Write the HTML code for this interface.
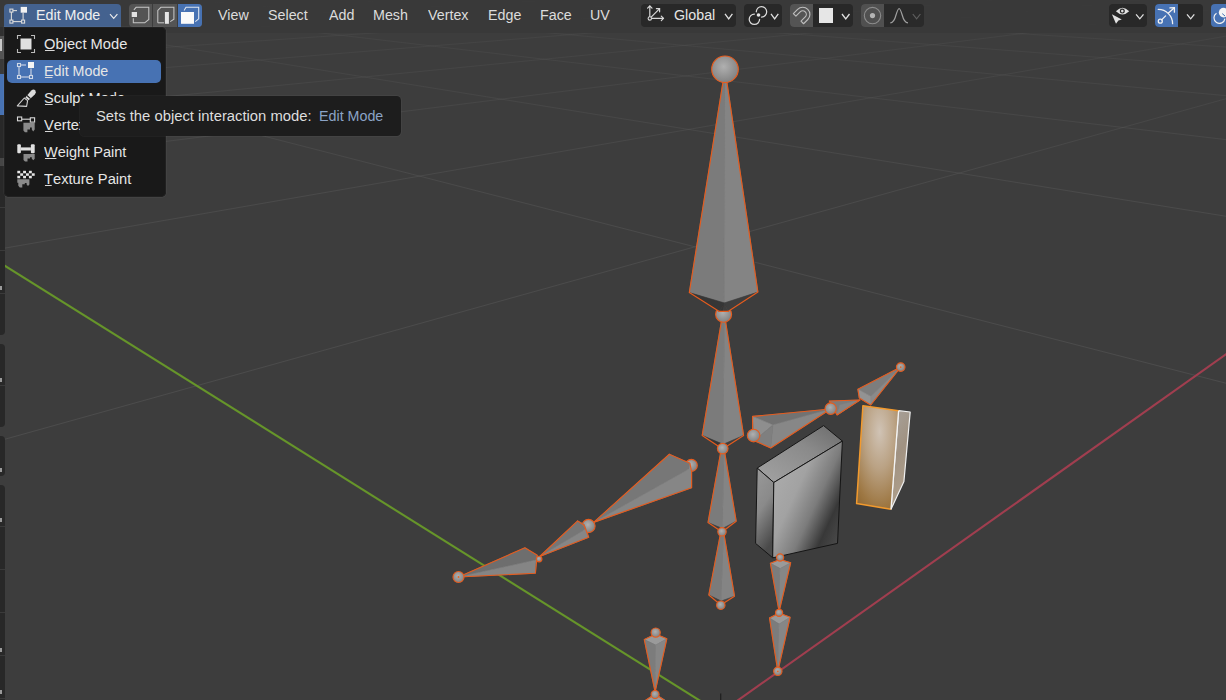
<!DOCTYPE html>
<html><head><meta charset="utf-8">
<style>
html,body{margin:0;padding:0;width:1226px;height:700px;overflow:hidden;background:#3d3d3d;font-family:"Liberation Sans",sans-serif;}
#scene{position:absolute;left:0;top:0;}
.hdr{position:absolute;left:0;top:0;width:1226px;height:32.5px;background:rgba(57,57,57,0.9);}
.tb{position:absolute;left:0;width:5px;background:#282828;border-radius:0 4px 4px 0;}
.sep{position:absolute;left:0;width:5px;height:1px;background:#3a3a3a;}
.btn{position:absolute;top:4px;height:23px;border-radius:4px;}
.menuitem{position:absolute;color:#e2e2e2;font-size:14.3px;}
.mtext{position:absolute;top:5px;height:14px;line-height:14px;color:#dcdcdc;font-size:14.3px;}
</style></head><body>
<svg id="scene" width="1226" height="700" viewBox="0 0 1226 700">
<defs>
  <radialGradient id="sph" cx="0.45" cy="0.4" r="0.6">
    <stop offset="0" stop-color="#b0b0b0"/><stop offset="1" stop-color="#828282"/>
  </radialGradient>
  <linearGradient id="gtop" x1="0" y1="1" x2="1" y2="0"><stop offset="0" stop-color="#a3a3a3"/><stop offset="0.6" stop-color="#8a8a8a"/><stop offset="1" stop-color="#6a6a6a"/></linearGradient>
  <linearGradient id="gleft" x1="0" y1="0" x2="0.3" y2="1"><stop offset="0" stop-color="#9a9a9a"/><stop offset="0.5" stop-color="#8a8a8a"/><stop offset="1" stop-color="#4a4a4a"/></linearGradient>
  <linearGradient id="gfront" x1="0.05" y1="0.15" x2="0.95" y2="0.85"><stop offset="0" stop-color="#adadad"/><stop offset="0.35" stop-color="#a2a2a2"/><stop offset="0.6" stop-color="#7c7c7c"/><stop offset="0.82" stop-color="#383838"/><stop offset="1" stop-color="#4a4a4a"/></linearGradient>
  <radialGradient id="ofront" cx="0.55" cy="0.25" r="0.9"><stop offset="0" stop-color="#d0c3b5"/><stop offset="0.4" stop-color="#baa284"/><stop offset="0.8" stop-color="#9e7844"/><stop offset="1" stop-color="#8e6630"/></radialGradient>
  <linearGradient id="oside" x1="0" y1="0" x2="0.3" y2="1"><stop offset="0" stop-color="#a8a29c"/><stop offset="0.5" stop-color="#a09282"/><stop offset="1" stop-color="#b0a08c"/></linearGradient>
  <linearGradient id="gg" gradientUnits="userSpaceOnUse" x1="0" y1="30" x2="0" y2="700"><stop offset="0" stop-color="#5a5a5a" stop-opacity="0.22"/><stop offset="0.25" stop-color="#5a5a5a" stop-opacity="0.45"/><stop offset="1" stop-color="#5a5a5a" stop-opacity="0.58"/></linearGradient>
</defs>
<g id="grid"><line x1="-10.0" y1="443.4" x2="1236.0" y2="95.9" stroke="url(#gg)"/>
<line x1="-10.0" y1="65.8" x2="1236.0" y2="385.8" stroke="url(#gg)"/>
<line x1="-10.0" y1="250.7" x2="1236.0" y2="34.4" stroke="url(#gg)"/>
<line x1="-10.0" y1="16.5" x2="1236.0" y2="217.9" stroke="url(#gg)"/>
<line x1="-10.0" y1="163.6" x2="1236.0" y2="6.6" stroke="url(#gg)"/>
<line x1="-10.0" y1="-6.1" x2="1236.0" y2="140.8" stroke="url(#gg)"/>
<line x1="-10.0" y1="114.0" x2="1236.0" y2="-9.2" stroke="url(#gg)"/>
<line x1="-10.0" y1="-19.0" x2="1236.0" y2="96.6" stroke="url(#gg)"/>
<line x1="-10.0" y1="81.9" x2="1236.0" y2="-19.5" stroke="url(#gg)"/>
<line x1="-10.0" y1="-27.5" x2="1236.0" y2="67.9" stroke="url(#gg)"/>
<line x1="-10.0" y1="59.5" x2="1236.0" y2="-26.6" stroke="url(#gg)"/>
<line x1="-10.0" y1="-33.4" x2="1236.0" y2="47.7" stroke="url(#gg)"/>
<line x1="-10.0" y1="43.0" x2="1236.0" y2="-31.9" stroke="url(#gg)"/>
<line x1="-10.0" y1="-37.7" x2="1236.0" y2="32.8" stroke="url(#gg)"/>
<line x1="-10.0" y1="30.3" x2="1236.0" y2="-36.0" stroke="url(#gg)"/>
<line x1="-10.0" y1="-41.1" x2="1236.0" y2="21.3" stroke="url(#gg)"/>
<line x1="-10.0" y1="20.2" x2="1236.0" y2="-39.2" stroke="url(#gg)"/>
<line x1="-10.0" y1="-43.8" x2="1236.0" y2="12.2" stroke="url(#gg)"/>
<line x1="-10.0" y1="12.0" x2="1236.0" y2="-41.8" stroke="url(#gg)"/>
<line x1="-10.0" y1="-45.9" x2="1236.0" y2="4.8" stroke="url(#gg)"/>
<line x1="-10.0" y1="5.2" x2="1236.0" y2="-44.0" stroke="url(#gg)"/>
<line x1="-10.0" y1="-47.7" x2="1236.0" y2="-1.3" stroke="url(#gg)"/>
<line x1="-10.0" y1="-0.5" x2="1236.0" y2="-45.8" stroke="url(#gg)"/>
<line x1="-10.0" y1="-49.3" x2="1236.0" y2="-6.5" stroke="url(#gg)"/>
<line x1="-10.0" y1="-5.4" x2="1236.0" y2="-47.3" stroke="url(#gg)"/>
<line x1="-10.0" y1="-50.6" x2="1236.0" y2="-10.9" stroke="url(#gg)"/>
<line x1="-10.0" y1="-9.6" x2="1236.0" y2="-48.7" stroke="url(#gg)"/>
<line x1="-10.0" y1="-51.7" x2="1236.0" y2="-14.7" stroke="url(#gg)"/>
<line x1="-10.0" y1="-13.2" x2="1236.0" y2="-49.8" stroke="url(#gg)"/>
<line x1="-10.0" y1="-52.7" x2="1236.0" y2="-18.1" stroke="url(#gg)"/>
<line x1="-10.0" y1="-16.5" x2="1236.0" y2="-50.9" stroke="url(#gg)"/>
<line x1="-10.0" y1="-53.5" x2="1236.0" y2="-21.0" stroke="url(#gg)"/>
<line x1="-10.0" y1="-19.3" x2="1236.0" y2="-51.8" stroke="url(#gg)"/>
<line x1="-10.0" y1="-54.3" x2="1236.0" y2="-23.6" stroke="url(#gg)"/>
<line x1="-10.0" y1="-21.9" x2="1236.0" y2="-52.6" stroke="url(#gg)"/>
<line x1="-10.0" y1="-55.0" x2="1236.0" y2="-25.9" stroke="url(#gg)"/>
<line x1="-10.0" y1="-24.2" x2="1236.0" y2="-53.3" stroke="url(#gg)"/>
<line x1="-10.0" y1="-55.6" x2="1236.0" y2="-28.0" stroke="url(#gg)"/>
<line x1="-10.0" y1="-26.3" x2="1236.0" y2="-54.0" stroke="url(#gg)"/>
<line x1="-10.0" y1="-56.1" x2="1236.0" y2="-29.9" stroke="url(#gg)"/>
<line x1="-10.0" y1="-28.1" x2="1236.0" y2="-54.6" stroke="url(#gg)"/>
<line x1="-10.0" y1="-56.6" x2="1236.0" y2="-31.6" stroke="url(#gg)"/>
<line x1="-10.0" y1="-29.9" x2="1236.0" y2="-55.1" stroke="url(#gg)"/>
<line x1="-10.0" y1="-57.1" x2="1236.0" y2="-33.2" stroke="url(#gg)"/>
<line x1="-10.0" y1="-31.4" x2="1236.0" y2="-55.6" stroke="url(#gg)"/>
<line x1="-10.0" y1="-57.5" x2="1236.0" y2="-34.6" stroke="url(#gg)"/>
<line x1="-10.0" y1="-32.9" x2="1236.0" y2="-56.1" stroke="url(#gg)"/>
<line x1="-10.0" y1="-57.9" x2="1236.0" y2="-35.9" stroke="url(#gg)"/>
<line x1="-10.0" y1="-34.2" x2="1236.0" y2="-56.5" stroke="url(#gg)"/>
<line x1="-10.0" y1="-58.2" x2="1236.0" y2="-37.1" stroke="url(#gg)"/>
<line x1="-10.0" y1="-35.4" x2="1236.0" y2="-56.9" stroke="url(#gg)"/>
<line x1="-10.0" y1="-58.6" x2="1236.0" y2="-38.2" stroke="url(#gg)"/>
<line x1="-10.0" y1="-36.6" x2="1236.0" y2="-57.3" stroke="url(#gg)"/>
<line x1="-10.0" y1="-58.9" x2="1236.0" y2="-39.3" stroke="url(#gg)"/>
<line x1="-10.0" y1="-37.6" x2="1236.0" y2="-57.6" stroke="url(#gg)"/>
<line x1="-10.0" y1="-59.2" x2="1236.0" y2="-40.2" stroke="url(#gg)"/>
<line x1="-10.0" y1="-38.6" x2="1236.0" y2="-57.9" stroke="url(#gg)"/>
<line x1="-10.0" y1="-59.4" x2="1236.0" y2="-41.1" stroke="url(#gg)"/>
<line x1="-10.0" y1="-39.6" x2="1236.0" y2="-58.2" stroke="url(#gg)"/>
<line x1="-10.0" y1="-59.7" x2="1236.0" y2="-42.0" stroke="url(#gg)"/>
<line x1="-10.0" y1="-40.4" x2="1236.0" y2="-58.5" stroke="url(#gg)"/>
<line x1="-10.0" y1="-59.9" x2="1236.0" y2="-42.8" stroke="url(#gg)"/>
<line x1="-10.0" y1="-41.2" x2="1236.0" y2="-58.8" stroke="url(#gg)"/>
<line x1="-10.0" y1="-60.1" x2="1236.0" y2="-43.5" stroke="url(#gg)"/>
<line x1="-10.0" y1="-42.0" x2="1236.0" y2="-59.0" stroke="url(#gg)"/>
<line x1="-10.0" y1="-60.3" x2="1236.0" y2="-44.2" stroke="url(#gg)"/>
<line x1="-10.0" y1="-42.7" x2="1236.0" y2="-59.3" stroke="url(#gg)"/>
<line x1="-10.0" y1="-60.5" x2="1236.0" y2="-44.9" stroke="url(#gg)"/>
<line x1="-10.0" y1="-43.4" x2="1236.0" y2="-59.5" stroke="url(#gg)"/>
<line x1="-10.0" y1="-60.7" x2="1236.0" y2="-45.5" stroke="url(#gg)"/>
<line x1="-10.0" y1="-44.0" x2="1236.0" y2="-59.7" stroke="url(#gg)"/>
<line x1="-10.0" y1="-60.9" x2="1236.0" y2="-46.1" stroke="url(#gg)"/>
<line x1="-10.0" y1="-44.7" x2="1236.0" y2="-59.9" stroke="url(#gg)"/>
<line x1="-10.0" y1="-61.0" x2="1236.0" y2="-46.6" stroke="url(#gg)"/>
<line x1="-10.0" y1="-45.2" x2="1236.0" y2="-60.1" stroke="url(#gg)"/>
<line x1="-10.0" y1="-61.2" x2="1236.0" y2="-47.1" stroke="url(#gg)"/>
<line x1="-10.0" y1="-45.8" x2="1236.0" y2="-60.2" stroke="url(#gg)"/>
<line x1="-10.0" y1="-61.3" x2="1236.0" y2="-47.6" stroke="url(#gg)"/><line x1="-10.0" y1="1230.6" x2="1236.0" y2="347.1" stroke="#a03e4f" stroke-width="2.1"/><line x1="-10.0" y1="256.4" x2="1236.0" y2="1036.1" stroke="#66952a" stroke-width="2.1"/></g>
<g id="bones" stroke="#e65c1e" stroke-width="1.15" stroke-linejoin="round">
<polygon points="722.3,316.0 724.7,316.0 723.2,444.3 702.2,435.4" fill="#7b7b7b" stroke="#7b7b7b" stroke-width="0.6"/>
<polygon points="724.7,316.0 743.6,435.4 723.2,444.3" fill="#848484" stroke="#848484" stroke-width="0.6"/>
<polygon points="702.2,435.4 723.2,444.3 722.6,449.0" fill="#363636" stroke="#363636" stroke-width="0.6"/>
<polygon points="723.2,444.3 743.6,435.4 722.6,449.0" fill="#3e3e3e" stroke="#3e3e3e" stroke-width="0.6"/>
<polygon points="722.3,316.0 724.7,316.0 743.6,435.4 722.6,449.0 702.2,435.4" fill="none"/>
<polygon points="721.1,450.0 724.3,450.0 722.5,528.5 708.0,522.5" fill="#7b7b7b" stroke="#7b7b7b" stroke-width="0.6"/>
<polygon points="724.3,450.0 736.2,521.2 722.5,528.5" fill="#848484" stroke="#848484" stroke-width="0.6"/>
<polygon points="708.0,522.5 722.5,528.5 722.0,532.0" fill="#404040" stroke="#404040" stroke-width="0.6"/>
<polygon points="722.5,528.5 736.2,521.2 722.0,532.0" fill="#484848" stroke="#484848" stroke-width="0.6"/>
<polygon points="721.1,450.0 724.3,450.0 736.2,521.2 722.0,532.0 708.0,522.5" fill="none"/>
<polygon points="720.6,533.0 723.8,533.0 721.2,601.0 708.8,595.0" fill="#7b7b7b" stroke="#7b7b7b" stroke-width="0.6"/>
<polygon points="723.8,533.0 734.5,596.2 721.2,601.0" fill="#848484" stroke="#848484" stroke-width="0.6"/>
<polygon points="708.8,595.0 721.2,601.0 720.8,605.0" fill="#404040" stroke="#404040" stroke-width="0.6"/>
<polygon points="721.2,601.0 734.5,596.2 720.8,605.0" fill="#484848" stroke="#484848" stroke-width="0.6"/>
<polygon points="720.6,533.0 723.8,533.0 734.5,596.2 720.8,605.0 708.8,595.0" fill="none"/>
<circle cx="722.7" cy="448.6" r="5.3" fill="url(#sph)"/>
<circle cx="722.0" cy="531.8" r="4.2" fill="url(#sph)"/>
<circle cx="720.8" cy="605.2" r="4.2" fill="url(#sph)"/>
<circle cx="723.6" cy="314.2" r="8.0" fill="url(#sph)"/>
<polygon points="725.0,69.3 689.3,292.6 724.3,302.9" fill="#7b7b7b" stroke="#7b7b7b" stroke-width="0.6"/>
<polygon points="725.0,69.3 724.3,302.9 757.9,292.1" fill="#848484" stroke="#848484" stroke-width="0.6"/>
<polygon points="689.3,292.6 724.3,302.9 719.3,311.4" fill="#363636" stroke="#363636" stroke-width="0.6"/>
<polygon points="724.3,302.9 719.3,311.4 723.6,311.4" fill="#363636" stroke="#363636" stroke-width="0.6"/>
<polygon points="724.3,302.9 757.9,292.1 728.0,311.4" fill="#3e3e3e" stroke="#3e3e3e" stroke-width="0.6"/>
<polygon points="724.3,302.9 723.6,311.4 728.0,311.4" fill="#3e3e3e" stroke="#3e3e3e" stroke-width="0.6"/>
<polygon points="725.0,69.3 689.3,292.6 719.3,311.4 728.0,311.4 757.9,292.1" fill="none"/>
<circle cx="725.0" cy="69.3" r="13.3" fill="url(#sph)"/>
<polygon points="757.2,468.1 823.6,425.6 842.4,441.1 773.8,482.5" fill="url(#gtop)" stroke="#151515" stroke-width="1"/>
<polygon points="757.2,468.1 773.8,482.5 772.7,557.8 755.6,543.4" fill="url(#gleft)" stroke="#151515" stroke-width="1"/>
<polygon points="773.8,482.5 842.4,441.1 837.5,543.4 772.7,557.8" fill="url(#gfront)" stroke="#151515" stroke-width="1"/>
<polygon points="898.6,410.7 910.2,412.0 903.9,481.6 891.0,509.3" fill="url(#oside)" stroke="#f0f0f0" stroke-width="1.2"/>
<polygon points="862.9,405.7 898.6,410.7 891.0,509.3 856.6,503.6" fill="url(#ofront)" stroke="none"/>
<polyline points="891.0,509.3 856.6,503.6 862.9,405.7 898.6,410.7" fill="none" stroke="#f29a2e" stroke-width="1.5"/>
<line x1="898.6" y1="410.7" x2="891" y2="509.3" stroke="#f4f4f4" stroke-width="1.3"/>
<polygon points="830.7,409.0 752.6,416.4 772.9,425.0" fill="#727272" stroke="#727272" stroke-width="0.6"/>
<polygon points="830.7,409.0 772.9,425.0 770.7,447.9" fill="#878787" stroke="#878787" stroke-width="0.6"/>
<polygon points="752.6,416.4 772.9,425.0 754.3,440.7" fill="#8e8e8e" stroke="#8e8e8e" stroke-width="0.6"/>
<polygon points="772.9,425.0 770.7,447.9 754.3,440.7" fill="#7f7f7f" stroke="#7f7f7f" stroke-width="0.6"/>
<polygon points="830.7,409.0 752.6,416.4 752.6,435.0 754.3,440.7 770.7,447.9" fill="none"/>
<circle cx="753.6" cy="435.5" r="6.3" fill="url(#sph)"/>
<polygon points="829.3,401.0 860.0,400.0 837.0,415.0" fill="#7c7c7c" stroke="#7c7c7c" stroke-width="0.6"/>
<polygon points="840.0,405.0 860.0,400.0 837.0,415.0" fill="#858585" stroke="#858585" stroke-width="0.6"/>
<polygon points="829.3,401.0 860.0,400.0 837.0,415.0" fill="none"/>
<circle cx="830.7" cy="408.6" r="5.7" fill="url(#sph)"/>
<polygon points="857.9,389.3 900.7,367.1 870.7,396.4" fill="#7d7d7d" stroke="#7d7d7d" stroke-width="0.6"/>
<polygon points="870.7,396.4 900.7,367.1 870.7,405.0" fill="#8a8a8a" stroke="#8a8a8a" stroke-width="0.6"/>
<polygon points="857.9,389.3 870.7,396.4 870.7,405.0 859.3,397.9" fill="#939393" stroke="#939393" stroke-width="0.6"/>
<polygon points="857.9,389.3 900.7,367.1 870.7,405.0 859.3,397.9" fill="none"/>
<circle cx="900.7" cy="367.1" r="4.3" fill="url(#sph)"/>
<circle cx="900.7" cy="367.1" r="0.9" fill="#e8621f" stroke="none"/>
<circle cx="691.3" cy="465.4" r="6.0" fill="url(#sph)"/>
<circle cx="588.5" cy="526.0" r="6.6" fill="url(#sph)"/>
<polygon points="539.7,556.5 577.6,520.9 586.0,529.0" fill="#767676" stroke="#767676" stroke-width="0.6"/>
<polygon points="539.7,556.5 586.0,529.0 588.7,537.3" fill="#868686" stroke="#868686" stroke-width="0.6"/>
<polygon points="577.6,520.9 584.0,524.0 586.0,529.0" fill="#7a7a7a" stroke="#7a7a7a" stroke-width="0.6"/>
<polygon points="539.7,556.5 577.6,520.9 584.0,525.0 588.7,537.3" fill="none"/>
<polygon points="593.6,522.4 669.3,454.2 689.9,463.3 689.0,469.0" fill="#777777" stroke="#777777" stroke-width="0.6"/>
<polygon points="593.6,522.4 689.0,469.0 691.6,471.0 691.6,487.8" fill="#868686" stroke="#868686" stroke-width="0.6"/>
<polygon points="593.6,522.4 669.3,454.2 689.9,463.3 691.6,472.0 691.6,487.8" fill="none"/>
<polygon points="458.5,577.0 524.9,547.8 537.3,555.3 536.0,560.0" fill="#6e6e6e" stroke="#6e6e6e" stroke-width="0.6"/>
<polygon points="458.5,577.0 536.0,560.0 535.4,573.2" fill="#858585" stroke="#858585" stroke-width="0.6"/>
<polygon points="458.5,577.0 524.9,547.8 537.3,555.3 535.4,573.2" fill="none"/>
<circle cx="539.1" cy="559.0" r="2.8" fill="url(#sph)"/>
<circle cx="458.5" cy="577.0" r="5.5" fill="url(#sph)"/>
<circle cx="458.5" cy="577.0" r="0.9" fill="#e8621f" stroke="none"/>
<polygon points="770.4,563.3 780.0,559.5 790.7,562.7 780.1,568.5" fill="#9a9a9a" stroke="#9a9a9a" stroke-width="0.6"/>
<polygon points="770.4,563.3 780.1,568.5 779.1,611.5" fill="#7c7c7c" stroke="#7c7c7c" stroke-width="0.6"/>
<polygon points="780.1,568.5 790.7,562.7 779.1,611.5" fill="#868686" stroke="#868686" stroke-width="0.6"/>
<polygon points="770.4,563.3 780.0,559.5 790.7,562.7 779.1,611.5" fill="none"/>
<circle cx="780.1" cy="557.5" r="3.6" fill="url(#sph)"/>
<polygon points="769.5,617.9 779.1,613.0 790.1,617.3 779.1,624.1" fill="#9a9a9a" stroke="#9a9a9a" stroke-width="0.6"/>
<polygon points="769.5,617.9 779.1,624.1 777.8,671.3" fill="#7c7c7c" stroke="#7c7c7c" stroke-width="0.6"/>
<polygon points="779.1,624.1 790.1,617.3 777.8,671.3" fill="#868686" stroke="#868686" stroke-width="0.6"/>
<polygon points="769.5,617.9 779.1,613.0 790.1,617.3 777.8,671.3" fill="none"/>
<circle cx="779.1" cy="612.8" r="3.6" fill="url(#sph)"/>
<circle cx="777.8" cy="671.3" r="4.2" fill="url(#sph)"/>
<circle cx="777.8" cy="671.3" r="0.9" fill="#e8621f" stroke="none"/>
<polygon points="644.3,639.6 655.7,634.0 666.8,638.8 655.7,645.1" fill="#9a9a9a" stroke="#9a9a9a" stroke-width="0.6"/>
<polygon points="644.3,639.6 655.7,645.1 655.1,691.9" fill="#7c7c7c" stroke="#7c7c7c" stroke-width="0.6"/>
<polygon points="655.7,645.1 666.8,638.8 655.1,691.9" fill="#868686" stroke="#868686" stroke-width="0.6"/>
<polygon points="644.3,639.6 655.7,634.0 666.8,638.8 655.1,691.9" fill="none"/>
<circle cx="655.7" cy="632.6" r="4.6" fill="url(#sph)"/>
<polygon points="643.0,702.0 655.0,694.0 668.0,702.0 655.0,708.0" fill="#9a9a9a" stroke="#9a9a9a" stroke-width="0.6"/>
<polyline points="640.0,704.0 655.1,694.0 670.0,704.0" fill="none"/>
<circle cx="655.1" cy="694.5" r="4.0" fill="url(#sph)"/>
<line x1="720.7" y1="693.5" x2="720.7" y2="700" stroke="#1e1e1e" stroke-width="1.2"/>
</g>
</svg>
<div class="hdr"></div>
<div class="tb" style="top:27px;height:308px"></div>
<div class="tb" style="top:344px;height:83px"></div>
<div class="tb" style="top:436px;height:40px"></div>
<div class="tb" style="top:485px;height:235px"></div>
<div class="sep" style="top:207px"></div>
<div class="sep" style="top:250px"></div>
<div class="sep" style="top:293px"></div>
<div class="sep" style="top:385px"></div>
<div class="sep" style="top:526px"></div>
<div class="sep" style="top:569px"></div>
<div class="sep" style="top:612px"></div>
<div class="sep" style="top:655px"></div>
<div class="sep" style="top:698px"></div>
<div style="position:absolute;left:0;top:27px;width:4px;height:9px;background:#303030"></div>
<div style="position:absolute;left:0;top:36px;width:4px;height:23px;background:#545454"></div>
<div style="position:absolute;left:0;top:39px;width:1.5px;height:12px;background:#c8c8c8"></div>
<div style="position:absolute;left:0;top:59px;width:4px;height:15px;background:#3a3a3a"></div>
<div style="position:absolute;left:0;top:74px;width:4px;height:41px;background:#4772b3"></div>
<div style="position:absolute;left:0;top:158px;width:4px;height:8px;background:#464646"></div>
<div style="position:absolute;left:0;top:286px;width:2px;height:4px;background:#9a9a9a"></div>
<div style="position:absolute;left:0;top:378px;width:2px;height:4px;background:#9a9a9a"></div>
<div style="position:absolute;left:0;top:468px;width:2px;height:4px;background:#9a9a9a"></div>
<div style="position:absolute;left:0;top:518px;width:2px;height:4px;background:#9a9a9a"></div>
<div style="position:absolute;left:0;top:648px;width:2px;height:4px;background:#9a9a9a"></div>
<div style="position:absolute;left:0;top:690px;width:2px;height:4px;background:#9a9a9a"></div>
<div class="btn" style="left:4px;width:117px;top:4px;height:24px;background:#44628f;border-radius:4px 4px 0 0"></div>
<div style="position:absolute;left:36px;top:6.04px;height:16.98px;line-height:16.98px;font-size:15.2px;color:#f0f0f0;white-space:nowrap;transform:scaleX(0.94);transform-origin:0 0">Edit Mode</div>
<div class="btn" style="left:129px;width:73px;background:#545454"></div>
<div class="btn" style="left:178px;width:24px;background:#4772b3;border-radius:0 4px 4px 0"></div>
<div style="position:absolute;left:152px;top:4px;width:1px;height:23px;background:#3c3c3c"></div>
<div style="position:absolute;left:177px;top:4px;width:1px;height:23px;background:#3c3c3c"></div>
<div style="position:absolute;left:218px;top:6.14px;height:16.98px;line-height:16.98px;font-size:15.2px;color:#dcdcdc;white-space:nowrap;transform:scaleX(0.94);transform-origin:0 0">View</div>
<div style="position:absolute;left:268px;top:6.14px;height:16.98px;line-height:16.98px;font-size:15.2px;color:#dcdcdc;white-space:nowrap;transform:scaleX(0.94);transform-origin:0 0">Select</div>
<div style="position:absolute;left:329px;top:6.14px;height:16.98px;line-height:16.98px;font-size:15.2px;color:#dcdcdc;white-space:nowrap;transform:scaleX(0.94);transform-origin:0 0">Add</div>
<div style="position:absolute;left:372.5px;top:6.14px;height:16.98px;line-height:16.98px;font-size:15.2px;color:#dcdcdc;white-space:nowrap;transform:scaleX(0.94);transform-origin:0 0">Mesh</div>
<div style="position:absolute;left:427.5px;top:6.14px;height:16.98px;line-height:16.98px;font-size:15.2px;color:#dcdcdc;white-space:nowrap;transform:scaleX(0.94);transform-origin:0 0">Vertex</div>
<div style="position:absolute;left:488px;top:6.14px;height:16.98px;line-height:16.98px;font-size:15.2px;color:#dcdcdc;white-space:nowrap;transform:scaleX(0.94);transform-origin:0 0">Edge</div>
<div style="position:absolute;left:539.5px;top:6.14px;height:16.98px;line-height:16.98px;font-size:15.2px;color:#dcdcdc;white-space:nowrap;transform:scaleX(0.94);transform-origin:0 0">Face</div>
<div style="position:absolute;left:590px;top:6.14px;height:16.98px;line-height:16.98px;font-size:15.2px;color:#dcdcdc;white-space:nowrap;transform:scaleX(0.94);transform-origin:0 0">UV</div>
<div class="btn" style="left:641px;width:95px;background:#282828"></div>
<div style="position:absolute;left:673.5px;top:6.34px;height:16.98px;line-height:16.98px;font-size:15.2px;color:#e4e4e4;white-space:nowrap;transform:scaleX(0.94);transform-origin:0 0">Global</div>
<div class="btn" style="left:744px;width:38px;background:#282828"></div>
<div class="btn" style="left:790px;width:63px;background:#282828"></div>
<div class="btn" style="left:790px;width:23px;background:#545454;border-radius:4px 0 0 4px"></div>
<div style="position:absolute;left:818.7px;top:8px;width:14.8px;height:15px;background:#e6e6e6"></div>
<div class="btn" style="left:861px;width:63px;background:#2a2a2a"></div>
<div class="btn" style="left:861px;width:23px;background:#505050;border-radius:4px 0 0 4px"></div>
<div class="btn" style="left:1109px;width:38px;background:#282828"></div>
<div class="btn" style="left:1155px;width:48px;background:#282828"></div>
<div class="btn" style="left:1155px;width:23px;background:#4772b3;border-radius:4px 0 0 4px"></div>
<div class="btn" style="left:1211px;width:30px;background:#4772b3"></div>
<svg style="position:absolute;left:0;top:0" width="1226" height="32" viewBox="0 0 1226 32"><g fill="none" stroke="#dadada" stroke-width="1.1"><rect x="9.9" y="9.1" width="3" height="3"/><rect x="9.9" y="20.1" width="3" height="3"/><rect x="21.6" y="20.1" width="3" height="3"/><line x1="11.4" y1="12.1" x2="11.4" y2="20.1"/><line x1="12.9" y1="21.6" x2="21.6" y2="21.6"/><line x1="23.1" y1="12.7" x2="23.1" y2="20.1"/><line x1="12.9" y1="10.6" x2="17" y2="10.6"/></g><rect x="20.7" y="6.9" width="6.3" height="5.8" fill="#f2f2f2"/><polyline points="110,14.2 113.7,18.4 117.4,14.2" fill="none" stroke="#ececec" stroke-width="1.15"/><g fill="none" stroke="#c6c6c6" stroke-width="1.05"><polyline points="133.9,9.8 136.1,7.3 148.8,7.3 148.8,19.4 144.7,22.8 133.3,22.8 133.3,18.2"/><polyline points="157.8,22.8 157.8,10.4 160.9,7.3 173.9,7.3 173.9,19.1 170.2,21.6"/><line x1="157.8" y1="22.8" x2="164" y2="22.8"/><polyline points="184.1,10.4 186,7.3 198.7,7.3 198.7,18.8 195.3,21.6" stroke="#dfe6f0"/></g><rect x="131.7" y="12" width="5.3" height="5" fill="#e2e2e2"/><rect x="164.9" y="12" width="4" height="11.8" fill="#e6e6e6"/><rect x="181" y="12" width="13" height="11.8" fill="#fafafa"/><g fill="none" stroke="#d8d8d8" stroke-width="1.2" stroke-linecap="round" stroke-linejoin="round"><polyline points="649.8,6 649.8,18.4 663.5,18.4"/><polyline points="647.6,8.2 649.8,6 652,8.2"/><polyline points="661.3,16.2 663.5,18.4 661.3,20.6"/><line x1="651.4" y1="16.8" x2="659.6" y2="8.6"/><polyline points="656.4,8.6 659.6,8.6 659.6,11.8"/></g><circle cx="649.8" cy="18.4" r="1.7" fill="#282828" stroke="#d8d8d8" stroke-width="1.1"/><polyline points="725,13.8 728.7,18.8 732.4,13.8" fill="none" stroke="#e0e0e0" stroke-width="1.3"/><g fill="none" stroke="#dcdcdc" stroke-width="1.25" stroke-linecap="round"><path d="M754.4,14.1 A5.2,5.2 0 1 0 759.6,19.3"/><path d="M761.5,17 A5.2,5.2 0 1 0 756.3,11.8"/></g><circle cx="758.5" cy="15" r="1.8" fill="#e6e6e6"/><polyline points="771,13.8 774.65,18.8 778.3,13.8" fill="none" stroke="#e0e0e0" stroke-width="1.3"/><g transform="translate(802.7,14.4) rotate(45)"><path d="M-7.2,6 V0 A7.2,7.2 0 0 1 7.2,0 V6 H3.6 V0 A3.6,3.6 0 0 0 -3.6,0 V6 Z" fill="none" stroke="#bdbdbd" stroke-width="1.15" stroke-linejoin="round"/></g><polyline points="842,14 845.75,19 849.5,14" fill="none" stroke="#e0e0e0" stroke-width="1.3"/><circle cx="872.5" cy="15.6" r="8.2" fill="none" stroke="#8c8c8c" stroke-width="1.1"/><circle cx="872.5" cy="15.6" r="2.6" fill="#b4b4b4"/><path d="M890.3,22.8 Q894,22.8 896,15 Q898,8.5 899.1,8.5 Q900.2,8.5 902.2,15 Q904.2,22.8 908,22.8" fill="none" stroke="#a0a0a0" stroke-width="1.2"/><polyline points="912.8,14 916.5999999999999,18.8 920.4,14" fill="none" stroke="#5e5e5e" stroke-width="1.2"/><path d="M1115.9,11.2 Q1122.5,4.2 1129.2,11.2 Q1122.5,17.6 1115.9,11.2 Z" fill="#e2e2e2"/><circle cx="1122.3" cy="11.1" r="2.5" fill="#282828"/><circle cx="1122.3" cy="11.1" r="1.3" fill="#e2e2e2"/><polygon points="1111.9,14.3 1121.8,19.4 1118.4,20.4 1116,23.8" fill="#e2e2e2"/><polyline points="1136.1,14.3 1139.8,18.8 1143.5,14.3" fill="none" stroke="#e0e0e0" stroke-width="1.3"/><g fill="none" stroke="#f2f2f2" stroke-width="1.3" stroke-linecap="round"><path d="M1158.3,9.4 A14.3,14.3 0 0 1 1172.6,23.7"/><line x1="1161.6" y1="19.9" x2="1165.6" y2="15.9"/><line x1="1168.4" y1="13.1" x2="1174.1" y2="7.9"/><polyline points="1169.9,7.9 1174.4,7.7 1174.4,12.2"/><circle cx="1160.3" cy="21.2" r="2"/></g><polyline points="1187,14.3 1190.65,18.8 1194.3,14.3" fill="none" stroke="#e0e0e0" stroke-width="1.3"/><path d="M1216.5,13.2 A5.5,5.5 0 1 0 1224.9,18.6" fill="none" stroke="#f2f2f2" stroke-width="1.2"/><circle cx="1223.6" cy="12.6" r="4.8" fill="#f4f4f4"/><path d="M1222.2,13.6 L1225,16" stroke="#4772b3" stroke-width="1"/></svg>
<div style="position:absolute;left:3.5px;top:27px;width:162.5px;height:169.5px;background:#191919;border-radius:0 5px 5px 5px;box-shadow:inset 0 0 0 1px #212121, 0 0 0 1px rgba(255,255,255,0.035)"></div>
<div style="position:absolute;left:7px;top:60px;width:154px;height:23px;background:#4772b3;border-radius:5px"></div>
<div style="position:absolute;left:44px;top:35.24px;height:16.98px;line-height:16.98px;font-size:15.2px;color:#e6e6e6;white-space:nowrap;transform:scaleX(0.968);transform-origin:0 0"><span style="position:relative">O<span style="position:absolute;left:0.5px;right:1px;top:14.8px;height:1px;background:#d8d8d8"></span></span>bject Mode</div>
<div style="position:absolute;left:44px;top:62.24px;height:16.98px;line-height:16.98px;font-size:15.2px;color:#e6e6e6;white-space:nowrap;transform:scaleX(0.94);transform-origin:0 0"><span style="position:relative">E<span style="position:absolute;left:0.5px;right:1px;top:14.8px;height:1px;background:#d8d8d8"></span></span>dit Mode</div>
<div style="position:absolute;left:44px;top:89.24px;height:16.98px;line-height:16.98px;font-size:15.2px;color:#e6e6e6;white-space:nowrap;transform:scaleX(0.96);transform-origin:0 0"><span style="position:relative">S<span style="position:absolute;left:0.5px;right:1px;top:14.8px;height:1px;background:#d8d8d8"></span></span>culpt Mode</div>
<div style="position:absolute;left:44px;top:116.24px;height:16.98px;line-height:16.98px;font-size:15.2px;color:#e6e6e6;white-space:nowrap;transform:scaleX(0.96);transform-origin:0 0"><span style="position:relative">V<span style="position:absolute;left:0.5px;right:1px;top:14.8px;height:1px;background:#d8d8d8"></span></span>ertex Paint</div>
<div style="position:absolute;left:44px;top:143.24px;height:16.98px;line-height:16.98px;font-size:15.2px;color:#e6e6e6;white-space:nowrap;transform:scaleX(0.956);transform-origin:0 0"><span style="position:relative">W<span style="position:absolute;left:0.5px;right:1px;top:14.8px;height:1px;background:#d8d8d8"></span></span>eight Paint</div>
<div style="position:absolute;left:44px;top:170.24px;height:16.98px;line-height:16.98px;font-size:15.2px;color:#e6e6e6;white-space:nowrap;transform:scaleX(0.967);transform-origin:0 0"><span style="position:relative">T<span style="position:absolute;left:0.5px;right:1px;top:14.8px;height:1px;background:#d8d8d8"></span></span>exture Paint</div>
<svg style="position:absolute;left:16px;top:34px" width="20" height="20" viewBox="0 0 20 20"><g fill="none" stroke="#bcbcbc" stroke-width="1.1"><polyline points="1.5,5 1.5,1.5 5,1.5"/><polyline points="15,1.5 18.5,1.5 18.5,5"/><polyline points="1.5,15 1.5,18.5 5,18.5"/><polyline points="15,18.5 18.5,18.5 18.5,15"/></g><rect x="4.5" y="4.5" width="11" height="11" fill="#e0e0e0"/></svg>
<svg style="position:absolute;left:16px;top:61px" width="20" height="20" viewBox="0 0 20 20"><g fill="none" stroke="#cfd8e6" stroke-width="1.1"><rect x="1.5" y="2.5" width="3" height="3"/><rect x="1.5" y="14.5" width="3" height="3"/><rect x="13.5" y="14.5" width="3" height="3"/><line x1="3" y1="5.5" x2="3" y2="14.5"/><line x1="4.5" y1="16" x2="13.5" y2="16"/><line x1="15" y1="7.5" x2="15" y2="14.5"/><line x1="4.5" y1="4" x2="10" y2="4"/></g><rect x="12" y="1" width="6" height="6" fill="#f4f4f4"/></svg>
<svg style="position:absolute;left:0;top:0" width="60" height="200" viewBox="0 0 60 200"><path d="M17.3,105.9 L24.3,98 L27.6,100.6 L26.6,106.4 Z" fill="none" stroke="#d2d2d2" stroke-width="1.1" stroke-linejoin="round"/><path d="M25.3,97.4 L31.3,90.6 Q33.6,88.6 35.3,90.4 Q36.8,92.2 34.8,94.4 L28.6,100.2 Z" fill="#dcdcdc"/><path d="M27,95.5 L30.5,98.6" stroke="#181818" stroke-width="1.1"/><g fill="none" stroke="#d8d8d8" stroke-width="1.1"><rect x="17.5" y="117" width="4.2" height="3.8"/><rect x="30.3" y="117.8" width="4.3" height="4.3"/><line x1="21.7" y1="119.2" x2="30.3" y2="119.2"/></g><path d="M23.4,122.8 H34.7 V129.6 L33.2,131.4 L31.8,129.6 V127.6 H30 V129.5 H27.4 V132.3 H24.9 L23.4,130.5 Z" fill="#8a8a8a"/><rect x="17.3" y="144.3" width="3.6" height="9" rx="1" fill="#e0e0e0"/><rect x="30.9" y="144.3" width="3.8" height="9" rx="1" fill="#e0e0e0"/><rect x="20.9" y="147.4" width="10" height="3.1" fill="#e0e0e0"/><path d="M22.5,154 H34.7 V158.8 L33.3,160.2 L31.8,158.8 V157.2 H30 V158.6 H27.5 V161.6 H25 L23.5,160 V154 Z" fill="#8a8a8a"/><g fill="#e6e6e6"><rect x="17.3" y="170.8" width="2.9" height="2.5"/><rect x="23.1" y="170.8" width="2.9" height="2.5"/><rect x="28.9" y="170.8" width="2.9" height="2.5"/><rect x="20.2" y="173.3" width="2.9" height="2.5"/><rect x="26" y="173.3" width="2.9" height="2.5"/><rect x="31.8" y="173.3" width="2.9" height="2.5"/><rect x="17.3" y="175.8" width="2.9" height="2.5"/><rect x="23.1" y="175.8" width="2.9" height="2.5"/><rect x="28.9" y="175.8" width="2.9" height="2.5"/></g><path d="M17.3,179.3 H29.4 V184.5 L28,186 L26.6,184.5 V183 H24.8 V184.2 H22.3 V187.4 H19.8 L18.3,185.8 V182.8 H17.3 Z" fill="#8a8a8a"/></svg>
<div style="position:absolute;left:80px;top:96px;width:321px;height:40px;background:#1d1d1d;border-radius:4.5px;box-shadow:0 0 0 1px rgba(255,255,255,0.035)"></div>
<div style="position:absolute;left:95.8px;top:107.17px;height:17.31px;line-height:17.31px;font-size:15.5px;color:#dedede;white-space:nowrap;transform:scaleX(0.955);transform-origin:0 0">Sets the object interaction mode:</div>
<div style="position:absolute;left:319px;top:107.44px;height:16.98px;line-height:16.98px;font-size:15.2px;color:#8ba3c6;white-space:nowrap;transform:scaleX(0.94);transform-origin:0 0">Edit Mode</div>
</body></html>
